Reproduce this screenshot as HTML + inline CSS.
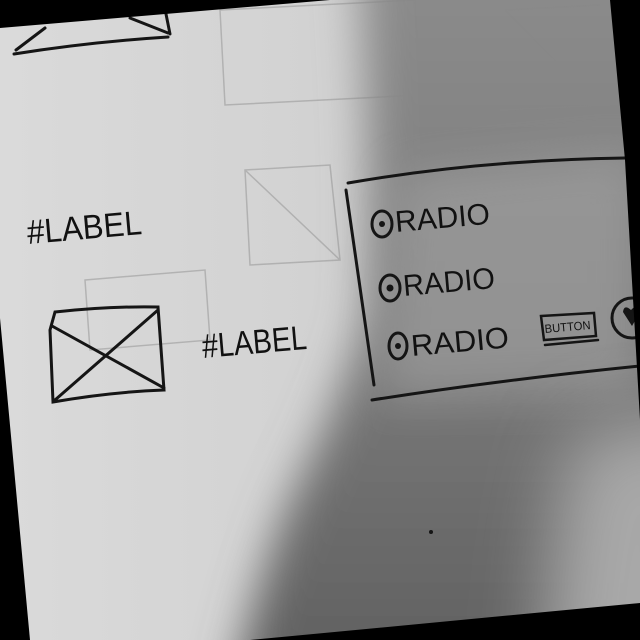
<!DOCTYPE html>
<html><head><style>
html,body{margin:0;width:640px;height:640px;overflow:hidden}
body{background:#d3d3d3;position:relative}
svg{position:absolute;left:0;top:0;display:block}
text{font-family:"Liberation Sans",sans-serif;fill:#111}
</style></head><body>
<svg width="640" height="640" viewBox="0 0 640 640">
<defs>
<filter id="b" filterUnits="userSpaceOnUse" x="-300" y="-300" width="1300" height="1300"><feGaussianBlur stdDeviation="22"/></filter>
<filter id="b2" filterUnits="userSpaceOnUse" x="-300" y="-300" width="1300" height="1300"><feGaussianBlur stdDeviation="35"/></filter>
<linearGradient id="sg" x1="0" y1="0" x2="0" y2="1"><stop offset="0" stop-color="#8e8e8e"/><stop offset="0.5" stop-color="#7c7c7c"/><stop offset="1" stop-color="#5c5c5c"/></linearGradient>
<linearGradient id="lg" x1="0" y1="0" x2="1" y2="0"><stop offset="0" stop-color="#dadada"/><stop offset="1" stop-color="#cacaca"/></linearGradient>
</defs>
<rect width="640" height="640" fill="url(#lg)"/>
<path d="M355 -80 L760 -80 L760 720 L225 720 Q260 560 300 480 Q340 400 365 320 Q375 200 355 -80Z" fill="url(#sg)" filter="url(#b)"/>
<path d="M400 175 L640 150 L640 390 L380 400Z" fill="#a6a6a6" opacity="0.55" filter="url(#b)"/>
<path d="M575 440 Q620 420 720 420 L720 720 L540 720 Q545 540 575 440Z" fill="#a8a8a8" filter="url(#b2)"/>
<g stroke="#888" stroke-width="1.5" fill="none" opacity="0.45">
<path d="M220 10 L415 0 L420 95 L225 105Z"/>
<path d="M505 10 L600 5 M500 110 L610 105 M505 10 L600 105"/>
<path d="M245 170 L330 165 L340 260 L250 265Z M245 170 L340 260"/>
<path d="M85 280 L205 270 L210 340 L90 350Z"/>
</g>
<g stroke="#151515" stroke-width="3" fill="none" stroke-linecap="round">
<path d="M14 54 Q90 42 168 37 M16 50 L45 28 M130 18 L168 33 M166 14 L170 34"/>
<path d="M55 312 Q110 306 158 307 L164 390 Q110 392 53 402 L50 330Z M52 326 L164 388 M158 310 L55 400"/>
<path d="M348 183 Q480 160 625 158"/>
<path d="M346 190 L374 385"/>
<path d="M372 400 Q500 380 640 366"/>
<ellipse cx="382" cy="224" rx="10" ry="13"/><ellipse cx="390" cy="288" rx="10" ry="13"/><ellipse cx="398" cy="346" rx="9" ry="13"/>
<path d="M541 316 L594 313 L596 336 L544 340Z M545 345 L598 340" stroke-width="2.5"/>
<circle cx="632" cy="318" r="20"/>
</g>
<g fill="#151515"><circle cx="382" cy="224" r="3"/><circle cx="390" cy="288" r="3.5"/><circle cx="398" cy="346" r="3"/><path d="M623 312 Q624 304 631 310 Q637 303 640 312 L632 326Z"/><circle cx="431" cy="532" r="2"/></g>
<text x="28" y="244" font-size="34" transform="rotate(-5 28 244)" textLength="115" lengthAdjust="spacingAndGlyphs">#LABEL</text>
<text x="203" y="358" font-size="34" transform="rotate(-5 203 358)" textLength="105" lengthAdjust="spacingAndGlyphs">#LABEL</text>
<text x="396" y="232" font-size="30" transform="rotate(-5 396 232)" textLength="95" lengthAdjust="spacingAndGlyphs">RADIO</text>
<text x="404" y="296" font-size="30" transform="rotate(-5 404 296)" textLength="92" lengthAdjust="spacingAndGlyphs">RADIO</text>
<text x="412" y="356" font-size="30" transform="rotate(-5 412 356)" textLength="98" lengthAdjust="spacingAndGlyphs">RADIO</text>
<text x="545" y="333" font-size="12" transform="rotate(-5 545 333)" textLength="46" lengthAdjust="spacingAndGlyphs">BUTTON</text>
<polygon points="0,0 330,0 0,28" fill="#000"/>
<polygon points="0,318 30,640 0,640" fill="#000"/>
<polygon points="250,640 640,603 640,640" fill="#000"/>
<polygon points="610,0 640,0 640,420 625,160" fill="#000"/>
</svg>
</body></html>
